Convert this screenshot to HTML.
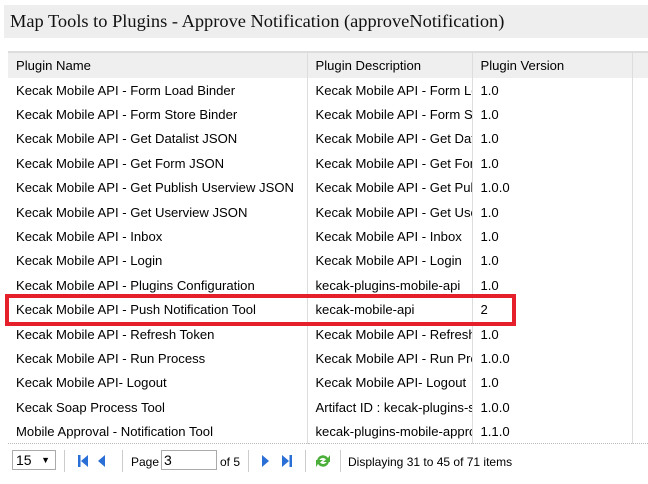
<!DOCTYPE html>
<html><head><style>
body{margin:0;width:648px;height:484px;background:#fff;font-family:"Liberation Sans",Arial,sans-serif;position:relative;overflow:hidden;color:#000}
.title{position:absolute;left:4px;top:5px;width:644px;height:33px;background:#eee;font-family:"Liberation Serif",serif;font-size:18.4px;line-height:33px;padding-left:6px;box-sizing:border-box;color:#111}
table{position:absolute;left:8px;top:51px;border-collapse:collapse;font-size:13.1px;table-layout:fixed;width:640px}
td{height:24.4px;padding:0 0 0 8px;border-right:1px solid #ddd;white-space:nowrap;overflow:hidden;box-sizing:border-box}
tr.h td{background:#efefef;height:26px;border-top:2px solid #ddd;border-right:1px solid #ddd}
tr:last-child td{border-bottom:1px dotted #bbb}
.red{position:absolute;left:5px;top:294px;width:503px;height:24px;border:4px solid #e5202a}
.bar{position:absolute;top:448px;font-size:12px}
.sep{position:absolute;top:450px;width:1px;height:22px;background:#ccc}
</style></head><body>
<div class="title">Map Tools to Plugins - Approve Notification (approveNotification)</div>
<table>
<colgroup><col style="width:299px"><col style="width:165px"><col style="width:160px"><col style="width:16px"></colgroup>
<tr class="h"><td>Plugin Name</td><td>Plugin Description</td><td>Plugin Version</td><td></td></tr>
<tr><td>Kecak Mobile API - Form Load Binder</td><td>Kecak Mobile API - Form Load Binder</td><td>1.0</td><td></td></tr>
<tr><td>Kecak Mobile API - Form Store Binder</td><td>Kecak Mobile API - Form Store</td><td>1.0</td><td></td></tr>
<tr><td>Kecak Mobile API - Get Datalist JSON</td><td>Kecak Mobile API - Get Datalist</td><td>1.0</td><td></td></tr>
<tr><td>Kecak Mobile API - Get Form JSON</td><td>Kecak Mobile API - Get Form</td><td>1.0</td><td></td></tr>
<tr><td>Kecak Mobile API - Get Publish Userview JSON</td><td>Kecak Mobile API - Get Publish</td><td>1.0.0</td><td></td></tr>
<tr><td>Kecak Mobile API - Get Userview JSON</td><td>Kecak Mobile API - Get Userview</td><td>1.0</td><td></td></tr>
<tr><td>Kecak Mobile API - Inbox</td><td>Kecak Mobile API - Inbox</td><td>1.0</td><td></td></tr>
<tr><td>Kecak Mobile API - Login</td><td>Kecak Mobile API - Login</td><td>1.0</td><td></td></tr>
<tr><td>Kecak Mobile API - Plugins Configuration</td><td>kecak-plugins-mobile-api</td><td>1.0</td><td></td></tr>
<tr><td>Kecak Mobile API - Push Notification Tool</td><td>kecak-mobile-api</td><td>2</td><td></td></tr>
<tr><td>Kecak Mobile API - Refresh Token</td><td>Kecak Mobile API - Refresh</td><td>1.0</td><td></td></tr>
<tr><td>Kecak Mobile API - Run Process</td><td>Kecak Mobile API - Run Process</td><td>1.0.0</td><td></td></tr>
<tr><td>Kecak Mobile API- Logout</td><td>Kecak Mobile API- Logout</td><td>1.0</td><td></td></tr>
<tr><td>Kecak Soap Process Tool</td><td>Artifact ID : kecak-plugins-soap</td><td>1.0.0</td><td></td></tr>
<tr><td>Mobile Approval - Notification Tool</td><td>kecak-plugins-mobile-approval</td><td>1.1.0</td><td></td></tr>
</table>
<div class="red"></div>
<div style="position:absolute;left:12px;top:450px;width:44px;height:20px;border:1px solid #aaa;box-sizing:border-box;font-size:14px;line-height:18px;padding-left:3px">15<span style="position:absolute;right:5px;font-size:9px">▼</span></div>
<div class="sep" style="left:64px"></div>
<svg style="position:absolute;left:77px;top:453px" width="36" height="16"><rect x="1" y="2" width="2.5" height="12" fill="#2a6fd6"/><path d="M11 2 L4 8 L11 14Z" fill="#2a6fd6"/><path d="M28 2 L21 8 L28 14Z" fill="#2a6fd6"/></svg>
<div class="sep" style="left:122px"></div>
<div class="bar" style="left:131px;top:455px">Page</div>
<div style="position:absolute;left:161px;top:450px;width:56px;height:20px;border:1px solid #aaa;box-sizing:border-box;font-size:14px;line-height:18px;padding-left:2px">3</div>
<div class="bar" style="left:220px;top:455px">of 5</div>
<div class="sep" style="left:248px"></div>
<svg style="position:absolute;left:259px;top:453px" width="36" height="16"><path d="M3 2 L10 8 L3 14Z" fill="#2a6fd6"/><path d="M23 2 L30 8 L23 14Z" fill="#2a6fd6"/><rect x="30.5" y="2" width="2.5" height="12" fill="#2a6fd6"/></svg>
<div class="sep" style="left:305px"></div>
<svg style="position:absolute;left:314px;top:452px" width="18" height="18"><path d="M3 9 A6 6 0 0 1 14 6 L16 3 L16 10 L9 10 L12 7.5 A4 4 0 0 0 5 9Z" fill="#4caf3a"/><path d="M15 9 A6 6 0 0 1 4 12 L2 15 L2 8 L9 8 L6 10.5 A4 4 0 0 0 13 9Z" fill="#4caf3a"/></svg>
<div class="sep" style="left:340px"></div>
<div class="bar" style="left:348px;top:455px">Displaying 31 to 45 of 71 items</div>
</body></html>
